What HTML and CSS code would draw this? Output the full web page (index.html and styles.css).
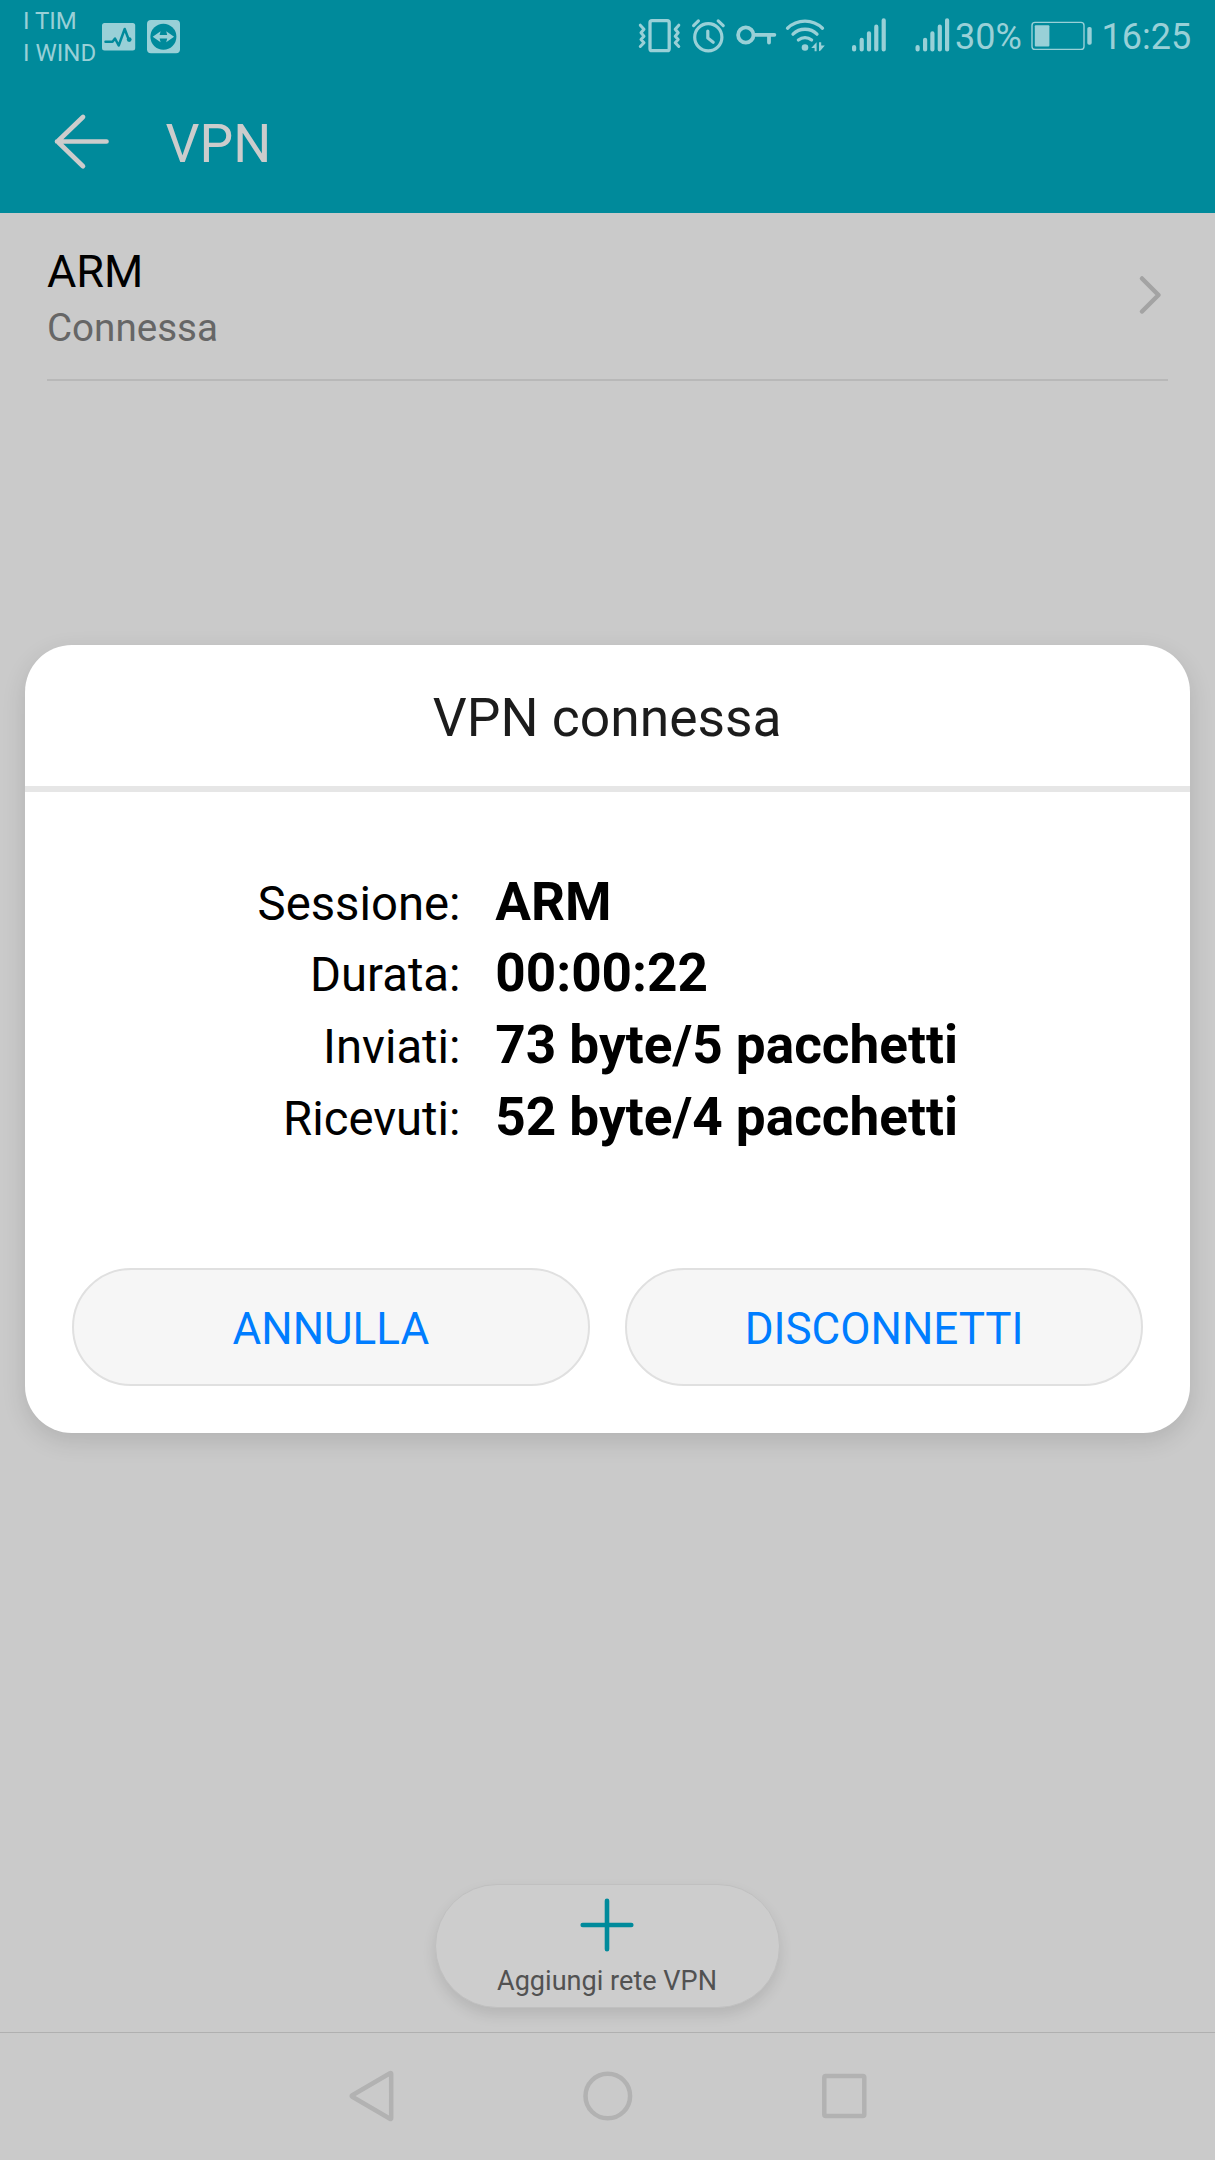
FILE: index.html
```html
<!DOCTYPE html>
<html lang="it">
<head>
<meta charset="utf-8">
<title>VPN</title>
<link rel="stylesheet" href="styles.css">
</head>
<body>
<div class="screen">
  <header class="top">
    <div class="status-bar">
      <div class="carriers"><span>I TIM</span><span>I WIND</span></div>
      <svg class="status-icon" width="40" height="42" viewBox="101 16 40 42"><rect x="102" y="23" width="33.2" height="27.4" rx="2.5" fill="#99d0d7"/><path d="M105.5 41.7H112.5L115 38.5L118.7 45.5L124.7 29L128.3 38.5" fill="none" stroke="#008a9b" stroke-width="2.5"/><circle cx="129.2" cy="39.6" r="2.4" fill="#008a9b"/></svg>
      <svg class="status-icon" width="42" height="42" viewBox="141 16 42 42"><rect x="147" y="20" width="33" height="33.3" rx="4" fill="#99d0d7"/><circle cx="163.4" cy="36.7" r="13" fill="#008a9b"/><path d="M152.7 36.7L160.6 31.2L159.6 35H167.2L166.2 31.2L174.1 36.7L166.2 42.2L167.2 38.4H159.6L160.6 42.2Z" fill="#99d0d7"/></svg>
      <div class="indicators">
        <svg class="status-icon line" width="48" height="42" viewBox="638 16 48 42" stroke-width="3.3"><rect x="650" y="20.7" width="19.2" height="30" rx="2"/><path d="M640.3 25.2L644 29.2L641 32.8L644 36.2L641 39.5L644 42.7L640.3 46.5M678.8 25.2L675.2 29.2L678.2 32.8L675.2 36.2L678.2 39.5L675.2 42.7L678.8 46.5" stroke-width="3"/></svg>
        <svg class="status-icon line" width="44" height="42" viewBox="686 16 44 42" stroke-width="3.2"><circle cx="708.3" cy="37.3" r="13.6"/><path d="M693.6 25.6L698.4 20.9M718.2 20.9L723.2 25.6M707.8 31V38L713.2 42.2"/></svg>
        <svg class="status-icon line" width="50" height="42" viewBox="730 16 50 42" stroke-width="3.8"><circle cx="745.8" cy="35" r="7.7"/><path d="M754 34.8H774.4M769 35V42.6"/></svg>
        <svg class="status-icon line" width="64" height="42" viewBox="780 16 64 42" stroke-width="3.3"><path d="M787.5 28.2A25 25 0 0 1 822.5 28.2M793 34.2A17 17 0 0 1 817 34.2M798.4 40A10.5 10.5 0 0 1 811.6 40"/><circle class="solid" cx="805" cy="47.5" r="3.3"/><path class="solid" d="M816.6 42.2V51.2H814.6V48H811.2ZM819 42.2V51.2L820.6 50.6L824.8 45.6H821.2V42.2Z"/></svg>
        <svg class="status-icon line" width="60" height="42" viewBox="844 16 60 42" stroke-width="4.2"><path d="M854.1 47V49.4M861.7 39.8V49.4M869 33.3V49.4M876.3 26.7V49.4M883.7 20.3V49.4"/></svg>
        <svg class="status-icon line" width="50" height="42" viewBox="904 16 50 42" stroke-width="4.2"><path d="M917.6 47V49.4M925.1 39.8V49.4M932.4 33.3V49.4M939.8 26.7V49.4M947.1 20.3V49.4"/></svg>
        <span class="percent">30%</span>
        <svg class="status-icon line" width="72" height="42" viewBox="1026 16 72 42" stroke-width="1.4"><rect x="1032" y="22.4" width="52" height="27" rx="3"/><rect class="solid" x="1034.8" y="25.2" width="14.6" height="21.2" rx="1"/><rect class="solid" x="1087.3" y="27" width="4.4" height="17.8" rx="1.8"/></svg>
        <span class="clock">16:25</span>
      </div>
    </div>
    <div class="app-bar">
      <svg class="back" width="62" height="62" viewBox="0 0 62 62"><path d="M57.5 29.5H8M34 5L8.5 29.5L34 54.2"/></svg>
      <h1>VPN</h1>
    </div>
  </header>

  <main class="content">
    <div class="vpn-item">
      <div class="vpn-text"><span class="vpn-name">ARM</span><span class="vpn-state">Connessa</span></div>
      <svg class="chevron" width="26" height="42" viewBox="0 0 26 42"><path d="M4 3.5L20.5 20L4 36.5"/></svg>
    </div>
    <button class="add">
      <svg width="60" height="60" viewBox="0 0 60 60"><path d="M30 5.8V54.3M5.7 30H54.3"/></svg>
      <span>Aggiungi rete VPN</span>
    </button>
  </main>

  <nav class="nav-bar">
    <svg width="56" height="56" viewBox="0 0 56 56"><path d="M47.2 5.7V50.3Q47.2 51.5 46 50.8L8.3 28.8Q7 28 8.3 27.2L46 5.2Q47.2 4.5 47.2 5.7Z"/></svg>
    <svg width="56" height="56" viewBox="0 0 56 56"><circle cx="27.8" cy="28" r="22.3"/></svg>
    <svg width="56" height="56" viewBox="0 0 56 56"><rect x="8.3" y="8" width="40" height="40" rx="1.5"/></svg>
  </nav>

  <section class="dialog" role="dialog">
    <h2>VPN connessa</h2>
    <dl>
      <dt>Sessione:</dt><dd>ARM</dd>
      <dt>Durata:</dt><dd>00:00:22</dd>
      <dt>Inviati:</dt><dd>73 byte/5 pacchetti</dd>
      <dt>Ricevuti:</dt><dd>52 byte/4 pacchetti</dd>
    </dl>
    <div class="actions"><button>ANNULLA</button><button>DISCONNETTI</button></div>
  </section>
</div>
</body>
</html>
```
FILE: styles.css
```css
* { box-sizing: border-box; margin: 0; padding: 0; }

body { font-family: Roboto, sans-serif; background: #cacaca; }

button { font-family: inherit; border: 0; }

svg { display: block; flex: none; fill: none; stroke-linecap: round; stroke-linejoin: round; }

.screen {
  position: relative;
  width: 1215px;
  height: 2160px;
  display: flex;
  flex-direction: column;
  overflow: hidden;
}

/* Status bar and title */
.top { height: 212.5px; background: #008a9b; flex: none; }

.status-bar {
  height: 74px;
  padding: 0 20px 0 23px;
  display: flex;
  align-items: center;
  color: #99d0d7;
}

.carriers {
  width: 78px;
  display: flex;
  flex-direction: column;
  font-size: 24px;
  line-height: 32px;
  white-space: nowrap;
}

.indicators { margin-left: auto; display: flex; align-items: center; font-size: 36px; line-height: 42px; }
.line { stroke: #99d0d7; }
.solid { fill: #99d0d7; stroke: none; }
.percent { width: 72px; padding-left: 1px; }
.clock { width: 97px; padding-left: 3.5px; }

.app-bar { height: 138.5px; padding-left: 49px; display: flex; align-items: center; }
.back { stroke: #ccc; stroke-width: 4.7; }
.app-bar h1 { margin-left: 54.5px; padding-top: 2px; font-size: 53.4px; font-weight: 400; line-height: 64px; color: #ccc; }

/* VPN list */
.content { flex: 1; display: flex; flex-direction: column; align-items: center; justify-content: space-between; padding-bottom: 24px; }

.vpn-item {
  width: 1121px;
  height: 168.5px;
  border-bottom: 2px solid #b8b8b8;
  display: flex;
  justify-content: space-between;
  align-items: center;
}
.vpn-text { display: flex; flex-direction: column; gap: 4px; padding-top: 7px; }
.vpn-name { font-size: 45px; line-height: 54px; color: #000; }
.vpn-state { font-size: 38.6px; line-height: 50px; color: #666; }
.chevron { margin-right: 4px; stroke: #a3a3a3; stroke-width: 4.5; }

.add {
  width: 345px;
  height: 124px;
  margin-right: 1px;
  border-radius: 62px;
  border: 1px solid #c0c0c0;
  background: #cdcdcd;
  box-shadow: 0 7px 14px rgba(0, 0, 0, .1);
  display: flex;
  flex-direction: column;
  align-items: center;
  padding-top: 10px;
}
.add svg { stroke: #008a9b; stroke-width: 4.6; }
.add span { font-size: 27.1px; line-height: 32px; margin-top: 9.5px; color: #525252; }

/* System navigation */
.nav-bar {
  height: 128px;
  border-top: 1.5px solid #b0b0b0;
  display: flex;
  justify-content: center;
  gap: 180px;
  padding-top: 34.5px;
}
.nav-bar svg { stroke: #b2b2b2; stroke-width: 4.5; }

/* Connection dialog */
.dialog {
  position: absolute;
  left: 24.5px;
  top: 644.5px;
  width: 1165.5px;
  height: 788.5px;
  border-radius: 47px;
  background: #fff;
  box-shadow: 0 8px 24px rgba(0, 0, 0, .12);
  display: flex;
  flex-direction: column;
}
.dialog h2 {
  height: 147.5px;
  padding-top: 4px;
  border-bottom: 6px solid #e6e6e6;
  font-size: 53.4px;
  font-weight: 400;
  line-height: 137px;
  text-align: center;
  color: #1c1c1c;
}
.dialog dl {
  display: grid;
  grid-template-columns: 436px 1fr;
  grid-auto-rows: 71.75px;
  column-gap: 34.7px;
  align-items: baseline;
  padding-top: 74.5px;
  color: #000;
}
.dialog dt { font-size: 47.25px; line-height: 60px; text-align: right; }
.dialog dd { font-size: 53.15px; line-height: 71px; font-weight: 700; }

.actions { margin-top: auto; padding: 0 47px 47px 47.5px; display: flex; gap: 35.5px; }
.actions button {
  flex: 1;
  height: 118px;
  padding-top: 4px;
  border: 2px solid #e0e0e0;
  border-radius: 59px;
  background: #f6f6f6;
  font-size: 44px;
  color: #007dff;
}
```
